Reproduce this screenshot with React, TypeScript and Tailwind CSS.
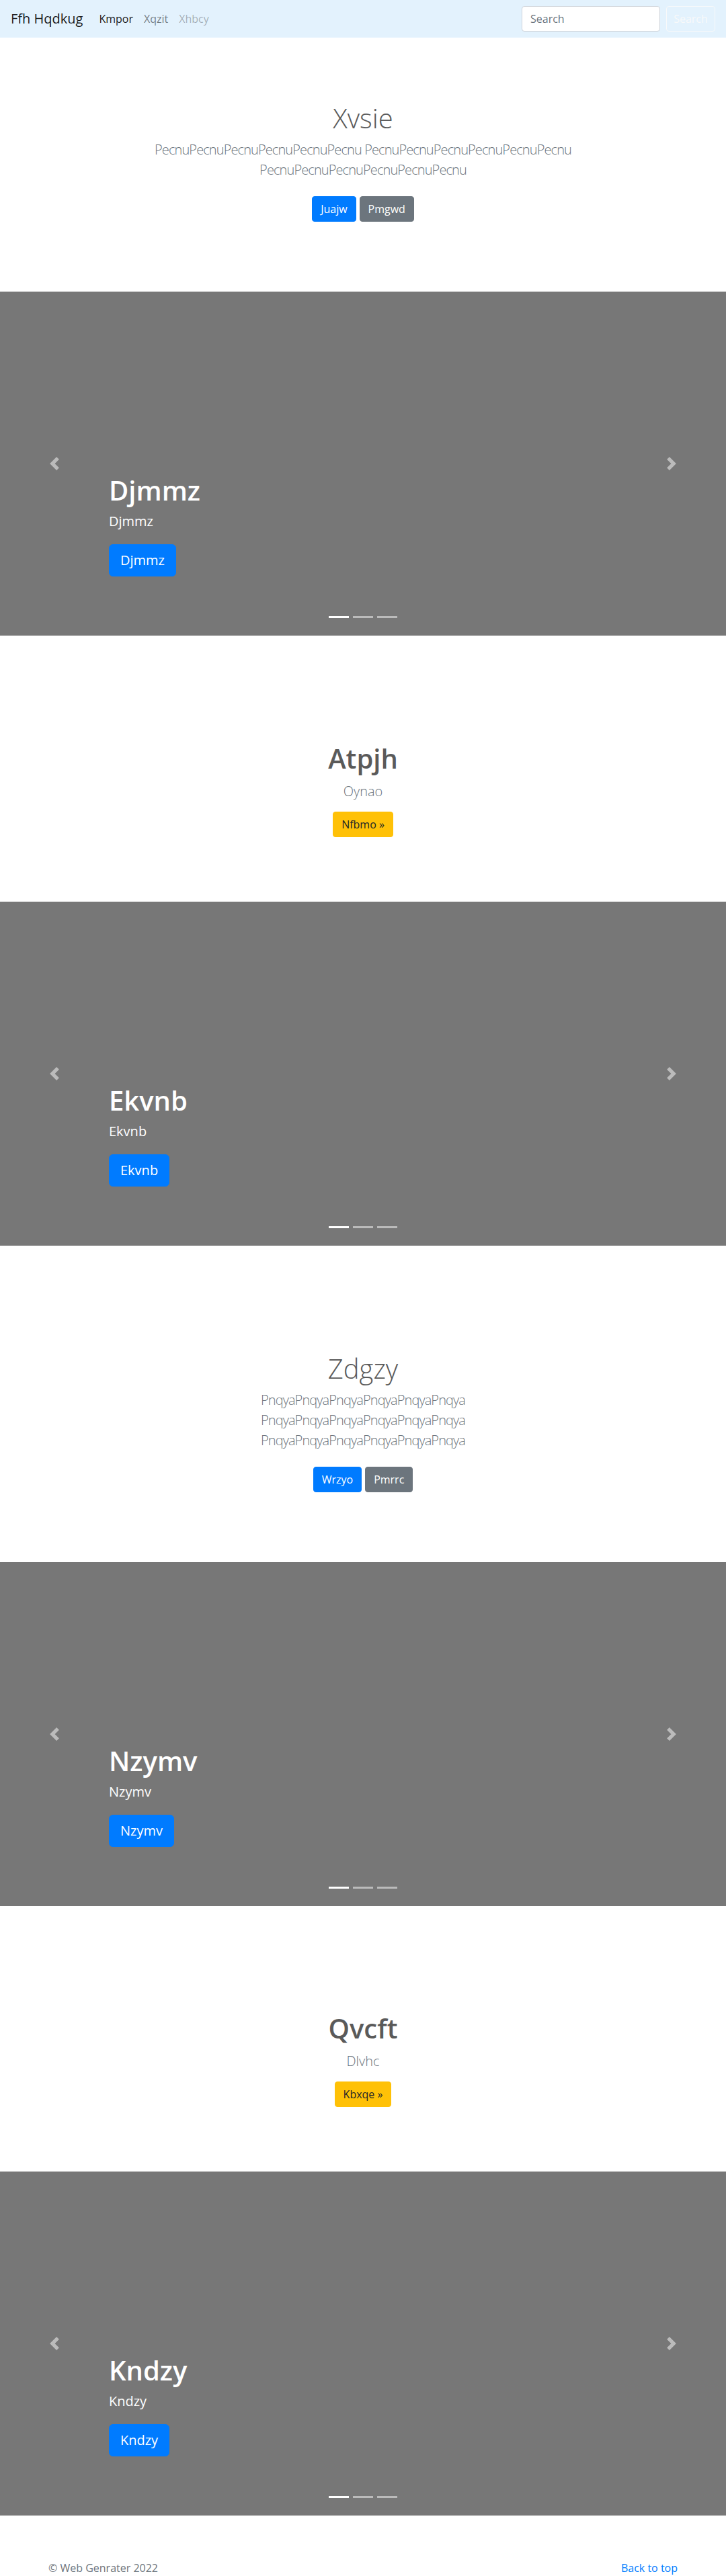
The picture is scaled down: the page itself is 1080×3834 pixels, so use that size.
import React from "react";

function Chevron({ dir }: { dir: "prev" | "next" }) {
  return (
    <svg width="20" height="20" viewBox="0 0 8 8" fill="#fff">
      {dir === "prev" ? (
        <path d="M5.25 0l-4 4 4 4 1.5-1.5L4.25 4l2.5-2.5L5.25 0z" />
      ) : (
        <path d="M2.75 0l-1.5 1.5L3.75 4l-2.5 2.5L2.75 8l4-4-4-4z" />
      )}
    </svg>
  );
}

function Carousel({ title }: { title: string }) {
  return (
    <div className="relative h-[512px] overflow-hidden bg-[#777777]">
      <div className="flex h-full flex-col justify-end px-[15%] pb-[68px] text-left text-white">
        <h1 className="mb-2 text-[40px] font-semibold leading-[48px]">{title}</h1>
        <p className="mb-5 text-[20px] leading-[28px]">{title}</p>
        <div className="mb-5">
          <a
            href="#"
            className="inline-block rounded-[6px] border border-[#007bff] bg-[#007bff] px-4 py-2 text-[20px] leading-[30px] text-white"
          >
            {title}
          </a>
        </div>
      </div>
      <a
        href="#"
        className="absolute inset-y-0 left-0 flex w-[15%] items-center justify-center opacity-50"
      >
        <Chevron dir="prev" />
      </a>
      <a
        href="#"
        className="absolute inset-y-0 right-0 flex w-[15%] items-center justify-center opacity-50"
      >
        <Chevron dir="next" />
      </a>
      <div className="absolute inset-x-0 bottom-[26px] flex justify-center">
        <span className="mx-[3px] h-[3px] w-[30px] bg-white" />
        <span className="mx-[3px] h-[3px] w-[30px] bg-white opacity-50" />
        <span className="mx-[3px] h-[3px] w-[30px] bg-white opacity-50" />
      </div>
    </div>
  );
}

function Hero({
  title,
  text,
  primary,
  secondary,
  pt,
  maxW,
}: {
  title: string;
  text: string;
  primary: string;
  secondary: string;
  pt: string;
  maxW: string;
}) {
  return (
    <section className={`${pt} pb-[96px] text-center`}>
      <h1 className="mb-2 text-[40px] font-light leading-[48px] text-[#5a5a5a]">{title}</h1>
      <p
        className={`mx-auto mb-4 ${maxW} text-[20px] font-light leading-[30px] tracking-[-0.9px] text-[#6c757d]`}
      >
        {text}
      </p>
      <div className="flex justify-center gap-[5px] py-2">
        <a
          href="#"
          className="inline-block rounded border border-[#007bff] bg-[#007bff] px-3 py-[6px] text-base leading-6 text-white"
        >
          {primary}
        </a>
        <a
          href="#"
          className="inline-block rounded border border-[#6c757d] bg-[#6c757d] px-3 py-[6px] text-base leading-6 text-white"
        >
          {secondary}
        </a>
      </div>
    </section>
  );
}

function Feature({ title, sub, btn, pt }: { title: string; sub: string; btn: string; pt: string }) {
  return (
    <section className={`${pt} pb-[96px] text-center`}>
      <h1 className="mb-[10px] text-[40px] font-semibold leading-[48px] text-[#5a5a5a]">{title}</h1>
      <p className="mb-[15px] text-[20px] font-light leading-[30px] text-[#6c757d]">{sub}</p>
      <a
        href="#"
        className="inline-block rounded border border-[#ffc107] bg-[#ffc107] px-3 py-[6px] text-base leading-6 text-[#212529]"
      >
        {btn} »
      </a>
    </section>
  );
}

export default function App() {
  const pecnu = "PecnuPecnuPecnuPecnuPecnuPecnu";
  const pnqya = "PnqyaPnqyaPnqyaPnqyaPnqyaPnqya";
  return (
    <div className="w-[1080px] bg-white font-['Open_Sans','Noto_Sans',sans-serif] text-[#5a5a5a]">
      <nav className="flex h-[56px] items-center bg-[#e3f2fd] px-4">
        <a href="#" className="mr-4 text-[20px] leading-[30px] text-black/90">
          Ffh Hqdkug
        </a>
        <ul className="flex text-base leading-6">
          <li>
            <a href="#" className="px-2 text-black/90">
              Kmpor
            </a>
          </li>
          <li>
            <a href="#" className="px-2 text-black/50">
              Xqzit
            </a>
          </li>
          <li>
            <a href="#" className="px-2 text-black/30">
              Xhbcy
            </a>
          </li>
        </ul>
        <form className="ml-auto flex items-center gap-[9px]">
          <input
            type="text"
            placeholder="Search"
            className="h-[38px] w-[206px] rounded border border-[#ced4da] bg-white px-3 text-base text-[#495057] outline-none placeholder:text-[#6c757d]"
          />
          <button
            type="button"
            className="h-[38px] w-[73px] rounded border border-[#f8f9fa] text-base text-[#f8f9fa]"
          >
            Search
          </button>
        </form>
      </nav>

      <Hero
        title="Xvsie"
        text={`${pecnu} ${pecnu} ${pecnu}`}
        primary="Juajw"
        secondary="Pmgwd"
        pt="pt-[96px]"
        maxW="max-w-[680px]"
      />
      <Carousel title="Djmmz" />
      <Feature title="Atpjh" sub="Oynao" btn="Nfbmo" pt="pt-[159px]" />
      <Carousel title="Ekvnb" />
      <Hero
        title="Zdgzy"
        text={`${pnqya} ${pnqya} ${pnqya}`}
        primary="Wrzyo"
        secondary="Pmrrc"
        pt="pt-[159px]"
        maxW="max-w-[560px]"
      />
      <Carousel title="Nzymv" />
      <Feature title="Qvcft" sub="Dlvhc" btn="Kbxqe" pt="pt-[158px]" />
      <Carousel title="Kndzy" />

      <footer className="pt-[66px] text-[#6c757d]">
        <div className="mx-auto flex w-[960px] justify-between px-3 text-base leading-6">
          <p>© Web Genrater 2022</p>
          <a href="#" className="text-[#007bff]">
            Back to top
          </a>
        </div>
      </footer>
    </div>
  );
}
